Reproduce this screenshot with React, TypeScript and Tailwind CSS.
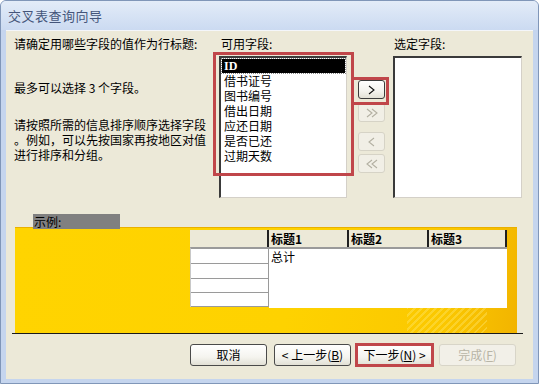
import React from "react";

const cjk = "font-['SimSun','Noto_Sans_CJK_SC',sans-serif]";

function Chevs({ dir, count, color }: { dir: "r" | "l"; count: number; color: string }) {
  const w = count === 1 ? 7 : 12;
  const pts = (x: number) =>
    dir === "r" ? `${x},1 ${x + 5},5 ${x},9` : `${x + 5},1 ${x},5 ${x + 5},9`;
  return (
    <svg width={w} height={10} viewBox={`0 0 ${w} 10`} fill="none" stroke={color} strokeWidth={1.1}>
      <polyline points={pts(1)} />
      {count === 2 && <polyline points={pts(6)} />}
    </svg>
  );
}

function SmallBtn({ children, enabled, className = "" }: { children: React.ReactNode; enabled?: boolean; className?: string }) {
  return (
    <div
      className={
        "w-[27px] h-[19px] rounded-[3px] flex items-center justify-center " +
        (enabled
          ? "border border-[#3c3c3c] bg-[linear-gradient(#ffffff,#f4f3ee_60%,#e3e1d6)]"
          : "border border-[#d6d3c6] bg-[#f1efe6]") +
        " " +
        className
      }
    >
      {children}
    </div>
  );
}

function BigBtn({ children, enabled = true }: { children: React.ReactNode; enabled?: boolean }) {
  return (
    <div
      className={
        "w-[77px] h-[22px] rounded-[3px] flex items-center justify-center text-[12px] leading-none " +
        (enabled
          ? "border border-[#4a4a4a] bg-[linear-gradient(#ffffff,#f5f4ef_60%,#e2e0d5)] text-black"
          : "border border-[#d8d5c8] bg-[#f2f0e8] text-[#b8b5a6]")
      }
    >
      {children}
    </div>
  );
}

export default function App() {
  const items = ["借书证号", "图书编号", "借出日期", "应还日期", "是否已还", "过期天数"];
  return (
    <div className={"w-[539px] h-[384px] bg-[#c5d5ee] border border-[#8096b8] rounded-t-[6px] flex flex-col overflow-hidden " + cjk}>
      {/* title bar */}
      <div className="h-[29px] flex items-center pl-[7px] bg-[linear-gradient(#e3ecf8,#cbdaf1)] text-[13px] text-[#44557a] tracking-[0.5px]">
        交叉表查询向导
      </div>
      {/* body */}
      <div className="relative mx-[5px] h-[349px] bg-[#ece9d8] border-t border-[#f4f6fa] flex flex-col">
        {/* top section */}
        <div className="flex items-start pt-[5px] text-[12px] leading-[15px] text-black">
          <div className="w-[207px] pl-[8px] flex flex-col">
            <div>请确定用哪些字段的值作为行标题:</div>
            <div className="mt-[29px] whitespace-pre">最多可以选择 3 个字段。</div>
            <div className="mt-[22px] flex flex-col">
              <div>请按照所需的信息排序顺序选择字段</div>
              <div>。例如，可以先按国家再按地区对值</div>
              <div>进行排序和分组。</div>
            </div>
          </div>
          <div className="ml-[6px] flex flex-col">
            <div className="pl-[2px] h-[15px]">可用字段:</div>
            <div className="mt-[5px] w-[128px] h-[142px] bg-white border-t-2 border-l-2 border-t-[#3a3a3a] border-l-[#3a3a3a] border-r border-b border-r-[#d4d0c8] border-b-[#d4d0c8] flex flex-col pt-[1px]">
              <div className="mx-[1px] h-[14px] bg-black text-white outline outline-1 outline-dotted outline-[#888] pl-[2px] flex items-center font-['Liberation_Serif',serif] text-[12px] font-bold leading-none">
                ID
              </div>
              {items.map((t) => (
                <div key={t} className="pl-[3px] h-[15px] leading-[15px]">
                  {t}
                </div>
              ))}
            </div>
          </div>
          <div className="ml-[11px] flex flex-col pt-[44px]">
            <SmallBtn enabled>
              <Chevs dir="r" count={1} color="#111" />
            </SmallBtn>
            <SmallBtn className="mt-[4px]">
              <Chevs dir="r" count={2} color="#b3b0a2" />
            </SmallBtn>
            <SmallBtn className="mt-[10px]">
              <Chevs dir="l" count={1} color="#b3b0a2" />
            </SmallBtn>
            <SmallBtn className="mt-[3px]">
              <Chevs dir="l" count={2} color="#b3b0a2" />
            </SmallBtn>
          </div>
          <div className="ml-[8px] flex flex-col">
            <div className="pl-[1px] h-[15px]">选定字段:</div>
            <div className="mt-[5px] w-[129px] h-[142px] bg-white border-t-2 border-l-2 border-t-[#3a3a3a] border-l-[#3a3a3a] border-r border-b border-r-[#d4d0c8] border-b-[#d4d0c8]" />
          </div>
        </div>

        {/* example label */}
        <div className="mt-[16px] ml-[27px] relative z-10 w-[87px] h-[15px] bg-[#808080] text-[12px] leading-[15px] text-black pl-[1px]">
          示例:
        </div>
        {/* yellow panel */}
        <div className="-mt-[2px] ml-[9px] w-[502px] h-[106px] border-t border-[#e9b000] bg-[linear-gradient(100deg,#ffd400,#fed200_55%,#fbc800_85%,#f2b400)] relative overflow-hidden">
          <div className="absolute right-[30px] bottom-[-20px] w-[80px] h-[60px] bg-[repeating-linear-gradient(135deg,rgba(255,235,120,0.35)_0px,rgba(255,235,120,0.35)_2px,transparent_2px,transparent_5px)]" />
          <div className="relative ml-[175px] mt-[2px] flex text-[12px] leading-[15px]">
            {/* row header column */}
            <div className="w-[79px] flex flex-col">
              <div className="h-[17px] bg-[#ece9d8] border-r-2 border-[#202020]" />
              <div className="bg-white border-t-2 border-[#9a9a9a] border-r border-r-[#9a9a9a] border-l border-l-[#c8c8c8] flex flex-col">
                <div className="h-[15px] border-b border-[#9a9a9a]" />
                <div className="h-[15px] border-b border-[#9a9a9a]" />
                <div className="h-[14px] border-b border-[#9a9a9a]" />
                <div className="h-[14px] border-b border-[#9a9a9a]" />
              </div>
            </div>
            {/* data columns */}
            <div className="w-[238px] flex flex-col">
              <div className="h-[17px] bg-[#ece9d8] flex font-bold text-[12px]">
                <div className="w-[80px] border-r-2 border-[#202020] pl-[2px] leading-[17px]">标题1</div>
                <div className="w-[80px] border-r-2 border-[#202020] pl-[2px] leading-[17px]">标题2</div>
                <div className="w-[78px] border-r-2 border-[#202020] pl-[2px] leading-[17px]">标题3</div>
              </div>
              <div className="h-[61px] bg-white border-t-2 border-[#9a9a9a] pl-[2px]">总计</div>
            </div>
          </div>
        </div>
        {/* black line */}
        <div className="ml-[6px] w-[511px] h-[1px] bg-[#1a1a1a]" />

        {/* bottom buttons */}
        <div className="mt-[10px] ml-[184px] flex text-[12px]">
          <BigBtn>取消</BigBtn>
          <div className="ml-[7px]">
            <BigBtn>
              <span className="whitespace-pre">&lt; 上一步(<u>B</u>)</span>
            </BigBtn>
          </div>
          <div className="ml-[5px] relative">
            <BigBtn>
              <span className="whitespace-pre">下一步(<u>N</u>) &gt;</span>
            </BigBtn>
            <div className="absolute -left-[1px] -top-[1px] w-[79px] h-[24px] border-[3px] border-[#c0464a] pointer-events-none" />
          </div>
          <div className="ml-[6px]">
            <BigBtn enabled={false}>
              <span className="whitespace-pre">完成(<u>F</u>)</span>
            </BigBtn>
          </div>
        </div>

        {/* red annotation boxes */}
        <div className="absolute left-[207px] top-[21px] w-[141px] h-[124px] border-[3px] border-[#c0464a] pointer-events-none" />
        <div className="absolute left-[345px] top-[46px] w-[38px] h-[28px] border-[3px] border-[#c0464a] pointer-events-none" />
      </div>
    </div>
  );
}
